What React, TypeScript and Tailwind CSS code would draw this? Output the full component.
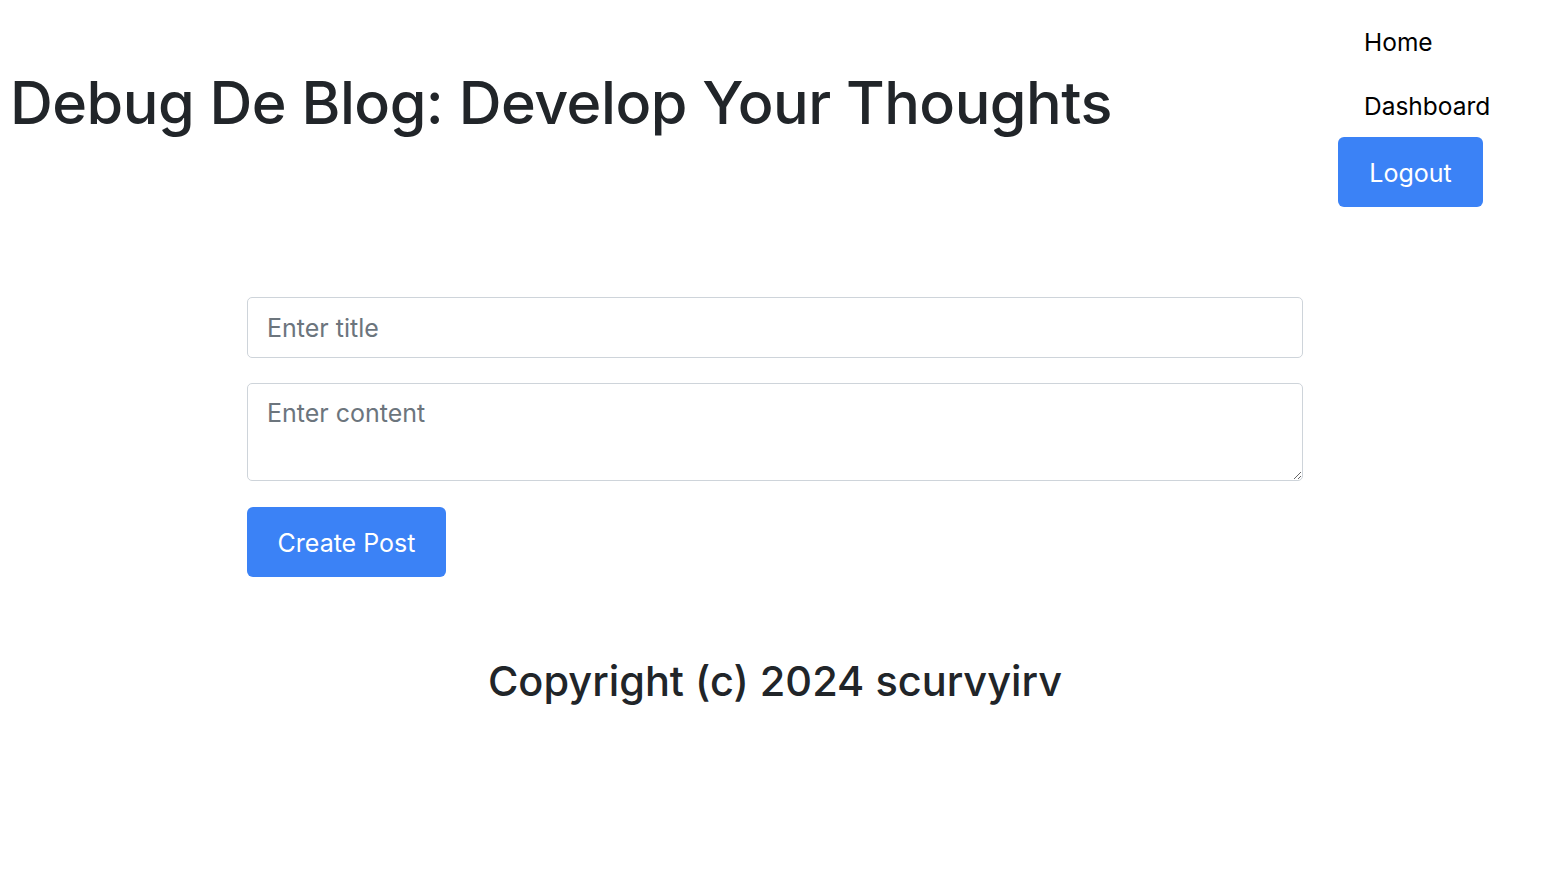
import React from "react";

export default function App() {
  const font = { fontFamily: "Inter, 'Noto Sans', sans-serif" };
  return (
    <div className="min-h-[876px] bg-white text-[#212529]" style={font}>
      <header className="flex justify-between">
        <h1 className="pl-[10px] pt-[64px] text-[59.3px] leading-[78px] font-medium tracking-[-0.5px]">
          Debug De Blog: Develop Your Thoughts
        </h1>
        <nav className="flex w-[206px] shrink-0 flex-col items-start pt-[24px]">
          <a className="block pl-[26px] h-[36px] leading-[36px] text-[24.5px] text-black">Home</a>
          <a className="block pl-[26px] mt-[28px] h-[36px] leading-[36px] text-[24.5px] text-black">Dashboard</a>
          <button className="mt-[13px] h-[70px] w-[145px] rounded-md bg-[#3b82f6] pt-[3px] text-[25px] text-white">
            Logout
          </button>
        </nav>
      </header>
      <main className="mx-auto mt-[90px] w-[1056px] translate-x-[3px]">
        <input
          className="block w-full h-[61px] rounded-[5px] border border-[#ced4da] px-[19px] text-[25px] placeholder:text-[#6c757d] outline-none"
          placeholder="Enter title"
        />
        <textarea
          className="block mt-[25px] w-full h-[98px] rounded-[5px] border border-[#ced4da] px-[19px] py-[11px] text-[25px] placeholder:text-[#6c757d] outline-none"
          placeholder="Enter content"
        />
        <button className="mt-[26px] h-[70px] w-[199px] rounded-md bg-[#3b82f6] pt-[3px] text-[25px] text-white">
          Create Post
        </button>
      </main>
      <footer className="mt-[76px] text-center text-[41.5px] font-medium leading-[56px] translate-x-[3px]">
        Copyright (c) 2024 scurvyirv
      </footer>
    </div>
  );
}
